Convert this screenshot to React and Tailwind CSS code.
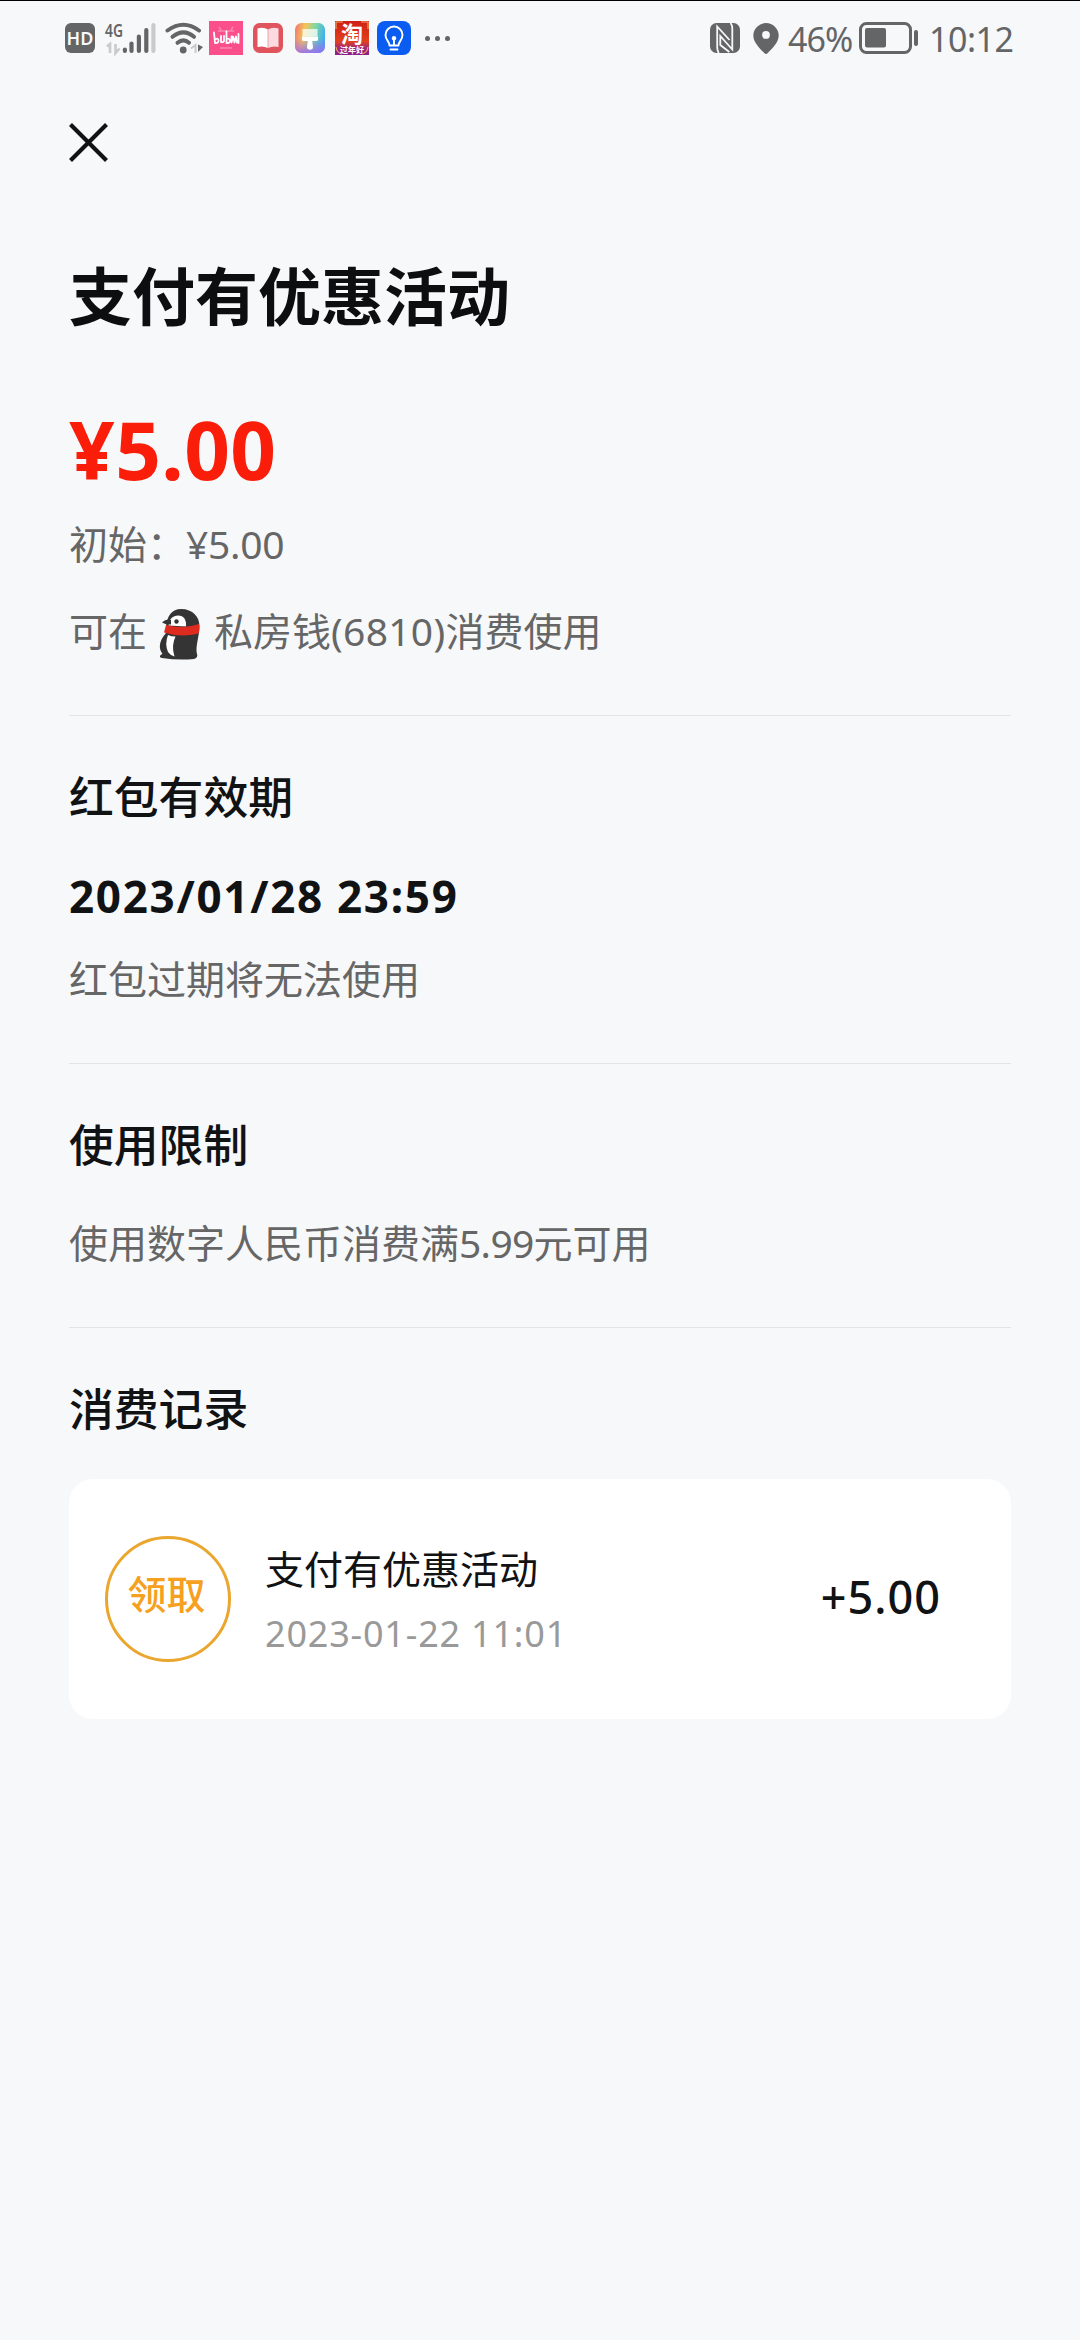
import React from "react";

const HdIcon = () => (
  <div className="flex h-[30px] w-[30px] items-center justify-center rounded-[6px] bg-[#646567] text-[18px] leading-[30px] font-semibold text-[#f7f8fa]">
    HD
  </div>
);

const SignalIcon = () => (
  <svg className="ml-[9px] h-[38px] w-[52px]" viewBox="104 18 52 38">
    <text x="105" y="35.6" fontSize="18" fontWeight="600" textLength="18" lengthAdjust="spacingAndGlyphs" fill="#646567">4G</text>
    <path d="M107 45.5l3-2.5v9M115.500 43v9l4-4.500" fill="none" stroke="#c9cacc" strokeWidth="2.600" />
    <g strokeWidth="4.200" strokeLinecap="round" stroke="#646567">
      <path d="M124.900 48.500V50" />
      <path d="M131.500 42.500V50" />
      <path d="M138.900 35.500V50" />
      <path d="M146.300 29V50" />
      <path d="M153.400 24V50" stroke="#c9cacc" />
    </g>
  </svg>
);

const WifiIcon = () => (
  <svg className="ml-[8px] h-[34px] w-[40px]" viewBox="164 20 40 34">
    <g fill="none" stroke="#646567" strokeWidth="4" strokeLinecap="round">
      <path d="M167.500 29.500Q183.500 18 199 29.500" />
      <path d="M172.500 35.800Q183.500 27 194 35.800" />
      <path d="M177.500 41.800Q183.500 37 189 41.800" />
    </g>
    <circle cx="183.200" cy="49" r="3.400" fill="#646567" />
    <path d="M191 47.500l4.500-3.500v8" fill="none" stroke="#c9cacc" strokeWidth="2" />
    <path d="M198 43.500l5 2.500-5 5z" fill="#646567" />
  </svg>
);

const PinkAppIcon = () => (
  <svg className="ml-[5px] h-[34px] w-[34px]" viewBox="0 0 34 34">
    <rect width="34" height="34" fill="#fb4f8b" />
    <path d="M12 9l-2-3M22 9l2-3M9 10h16M11 27h12" stroke="#fd87ae" strokeWidth="1.500" fill="none" />
    <path d="M5 11.500l1 10.500c5 1 4-6 1-4M12 15v6q2 1 3-1v-5M17.500 10.500v11.500c5 1 4-6 .5-4M22.500 15.500v6l1.500-6 1.500 6 1.500-6 1 6M29.500 13v9" stroke="#fff" strokeWidth="1.800" fill="none" strokeLinecap="round" strokeLinejoin="round" />
  </svg>
);

const BookAppIcon = () => (
  <svg className="ml-[10px] h-[30px] w-[30px]" viewBox="0 0 30 30">
    <rect width="30" height="30" rx="6.500" fill="#e0545d" />
    <path d="M4.500 5.500Q10.500 3.500 15 6.500v18.500Q10 22.500 4.500 24z" fill="#fff" />
    <path d="M25.500 5.500Q19.500 3.500 15 6.500v18.500Q20 22.500 25.500 24z" fill="#fbdbdf" />
    <path d="M15 6.500v18.500" stroke="#e88f98" strokeWidth=".8" />
  </svg>
);

const BrushAppIcon = () => (
  <svg className="ml-[12px] h-[30px] w-[30px]" viewBox="0 0 30 30">
    <defs>
      <linearGradient id="brushBase" x1="0" y1=".3" x2="1" y2=".5">
        <stop offset="0" stopColor="#f0806f" />
        <stop offset=".3" stopColor="#f3c657" />
        <stop offset=".62" stopColor="#7ed8a4" />
        <stop offset="1" stopColor="#39aff2" />
      </linearGradient>
      <linearGradient id="brushShade" x1="0" y1="0" x2="0" y2="1">
        <stop offset=".5" stopColor="#a85cf0" stopOpacity="0" />
        <stop offset="1" stopColor="#9a6bf2" stopOpacity=".9" />
      </linearGradient>
    </defs>
    <rect width="30" height="30" rx="6.500" fill="url(#brushBase)" />
    <rect width="30" height="30" rx="6.500" fill="url(#brushShade)" />
    <path d="M7.500 6h15v7.500h-15z" fill="#fff" fillOpacity=".75" />
    <path d="M7 13.500h16v3q0 1.500-2 1.500h-3.800l.8 6q0 2.700-3 2.700t-3-2.700l.8-6H9q-2 0-2-1.500z" fill="#fff" />
  </svg>
);

const TaoAppIcon = () => (
  <svg className="ml-[10px] h-[34px] w-[34px]" viewBox="0 0 34 34">
    <defs>
      <linearGradient id="tao" x1="0" y1="0" x2="0" y2="1">
        <stop offset="0" stopColor="#cf1f16" />
        <stop offset=".6" stopColor="#e2401c" />
        <stop offset=".8" stopColor="#9d2a7d" />
        <stop offset="1" stopColor="#8a1f86" />
      </linearGradient>
    </defs>
    <rect width="34" height="34" fill="url(#tao)" />
    <path d="M1 8V1h7M26 1h7v7M1 26q1 6 6 7M33 26q-1 6-6 7" fill="none" stroke="#f2a35b" strokeWidth="1.200" />
    <text x="17" y="21" fontSize="22" fontWeight="700" textAnchor="middle" fill="#fff">淘</text>
    <text x="17" y="32" fontSize="8" fontWeight="700" textAnchor="middle" fill="#fff">过年好</text>
  </svg>
);

const BulbAppIcon = () => (
  <svg className="ml-[8px] h-[34px] w-[34px]" viewBox="0 0 34 34">
    <rect width="34" height="34" rx="8" fill="#0b5cf0" />
    <g fill="none" stroke="#fff" strokeWidth="1.900" strokeLinecap="round" strokeLinejoin="round">
      <path d="M12.500 24.500c0-4-4-5.500-4-10.500a8.500 8.500 0 0 1 17 0c0 5-4 6.500-4 10.500z" />
      <path d="M13.500 28.500h7M17 18v6" />
    </g>
    <circle cx="17" cy="17.300" r="2.200" fill="#fff" />
  </svg>
);

const MoreDots = () => (
  <div className="ml-[14px] flex gap-[5px]">
    <span className="h-[5px] w-[5px] rounded-full bg-[#646567]" />
    <span className="h-[5px] w-[5px] rounded-full bg-[#646567]" />
    <span className="h-[5px] w-[5px] rounded-full bg-[#646567]" />
  </div>
);

const NfcIcon = () => (
  <svg className="h-[30px] w-[30px]" viewBox="0 0 30 30">
    <rect width="30" height="30" rx="6.500" fill="#646567" />
    <g fill="none" stroke="#f7f8fa" strokeWidth="1.800">
      <path d="M8.800 30Q7.200 28 7.200 24V3.500L19.500 17" />
      <path d="M20.500 0Q22.300 2 22.300 6v20.500L10.300 13v9l9 7" />
    </g>
  </svg>
);

const PinIcon = () => (
  <svg className="ml-[13px] h-[31px] w-[26px]" viewBox="0 0 26 31">
    <path fillRule="evenodd" d="M13 0a12.700 12.700 0 0 1 12.700 12.500C25.700 20 18 26.500 14.500 30.300q-1.500 1.300-3 0C8 26.500.3 20 .3 12.500A12.700 12.700 0 0 1 13 0zm0 8a3.900 3.900 0 1 0 0 7.800A3.900 3.900 0 0 0 13 8z" fill="#646567" />
  </svg>
);

const BatteryIcon = () => (
  <svg className="ml-[6px] h-[32px] w-[60px]" viewBox="0 0 60 32">
    <rect x="1.500" y="1.500" width="50" height="29" rx="6" fill="none" stroke="#646567" strokeWidth="3" />
    <rect x="6" y="6" width="21" height="19.500" rx="2" fill="#646567" />
    <rect x="55" y="8" width="4" height="16" rx="2" fill="#646567" />
  </svg>
);

const StatusBar = () => (
  <header className="flex h-[75px] items-center border-t border-black pl-[65px] pr-[66px]">
    <HdIcon />
    <SignalIcon />
    <WifiIcon />
    <PinkAppIcon />
    <BookAppIcon />
    <BrushAppIcon />
    <TaoAppIcon />
    <BulbAppIcon />
    <MoreDots />
    <div className="ml-auto flex items-center text-[34px] leading-[34px] text-[#646567]">
      <NfcIcon />
      <PinIcon />
      <span className="mt-[2px] ml-[9px] w-[65px] tracking-[-1px]">46%</span>
      <BatteryIcon />
      <span className="mt-[2px] ml-[10px] w-[85px] tracking-[-0.500px]">10:12</span>
    </div>
  </header>
);

const Penguin = () => (
  <svg className="mt-[6px] ml-[11px] h-[52px] w-[42px]" viewBox="0 0 42 52">
    <path d="M8 18C9 8 14 1 23 1c12 0 18.500 8 18.500 17 0 10-4.500 21-2.500 28 1 3-1 4.500-3 5Q20 52.500 4 50c-3-.5-2.500-3 .5-4C-.5 39 2 32 8 25z" fill="#333433" />
    <path d="M10.500 17.500C11 11 15 7.500 20 7.500c6 0 8.500 4.500 8 11z" fill="#fff" />
    <path d="M4 14.500q4-4 9-2.500v4.500q-5 .5-9-2z" fill="#333433" />
    <circle cx="18.500" cy="13.500" r="2.200" fill="#333433" />
    <path d="M8 17Q25 21.500 41 16q.8 5-.3 9.500Q23 30 6 24.500z" fill="#dd2b20" />
    <path d="M10 27q3.500 1.500 7.500 1.500Q13 38 16.500 48.500q-4-1-6.500-4.500-3.500-8 0-17z" fill="#fff" />
  </svg>
);

const Divider = ({ className }) => <hr className={`border-0 h-px bg-[#e3e4e6] ${className}`} />;

const SectionTitle = ({ children }) => (
  <h2 className="mt-[58px] h-[46px] text-[44.800px] leading-[46px] font-medium text-[#111213]">{children}</h2>
);

export default function App() {
  return (
    <div lang="zh-CN" className="flex h-[2340px] w-[1080px] flex-col overflow-hidden bg-[#f7f8fa] font-['Noto_Sans','Noto_Sans_CJK_SC',sans-serif] whitespace-nowrap">
      <StatusBar />
      <main className="flex flex-col px-[69px]">
        <button className="mt-[48px] h-[39px] w-[39px]" aria-label="关闭">
          <svg viewBox="0 0 39 39" className="h-full w-full">
            <path d="M1.500 1.500l36 36M37.500 1.500l-36 36" stroke="#111213" strokeWidth="4.200" />
          </svg>
        </button>

        <h1 className="mt-[102px] text-[63px] leading-[64px] font-bold text-[#0d0e0f]">支付有优惠活动</h1>
        <p className="mt-[81px] text-[80px] leading-[80px] font-bold tracking-[0.400px] text-[#fa1e0a]">¥5.00</p>
        <p className="mt-[35px] text-[39px] leading-[40px] text-[#666]">初始：<span className="tracking-[-0.300px]">¥5.00</span></p>
        <div className="mt-[39px] flex h-[56px] items-center text-[39px] leading-[40px] text-[#666]">
          <span>可在</span>
          <Penguin />
          <span className="ml-[14px]">私房钱<span className="tracking-[0.300px]">(6810)</span>消费使用</span>
        </div>

        <Divider className="mt-[56px]" />
        <SectionTitle>红包有效期</SectionTitle>
        <p className="mt-[54px] text-[44px] leading-[44px] font-bold tracking-[1.700px] text-[#111213]">2023/01/28 23:59</p>
        <p className="mt-[41px] text-[39px] leading-[40px] text-[#666]">红包过期将无法使用</p>

        <Divider className="mt-[64px]" />
        <SectionTitle>使用限制</SectionTitle>
        <p className="mt-[55px] text-[39px] leading-[40px] text-[#666]">使用数字人民币消费满<span className="tracking-[-0.700px]">5.99</span>元可用</p>

        <Divider className="mt-[64px]" />
        <SectionTitle>消费记录</SectionTitle>
        <section className="mt-[47px] flex h-[240px] items-center rounded-[24px] bg-white pl-[36px] pr-[70px]">
          <div className="flex h-[126px] w-[126px] items-center justify-center rounded-full border-[3px] border-[#eba62e] pr-[3px] pb-[11px] text-[39px] leading-[40px] font-medium text-[#f5a01e]">
            领取
          </div>
          <div className="ml-[34px] flex flex-col pt-[3px]">
            <span className="text-[39px] leading-[40px] text-[#111213]">支付有优惠活动</span>
            <span className="mt-[27px] text-[36px] leading-[36px] tracking-[0.800px] text-[#999]">2023-01-22 11:01</span>
          </div>
          <span className="mb-[5px] ml-auto text-[45px] leading-[44px] font-medium tracking-[1px] text-[#111213]">+5.00</span>
        </section>
      </main>
    </div>
  );
}
